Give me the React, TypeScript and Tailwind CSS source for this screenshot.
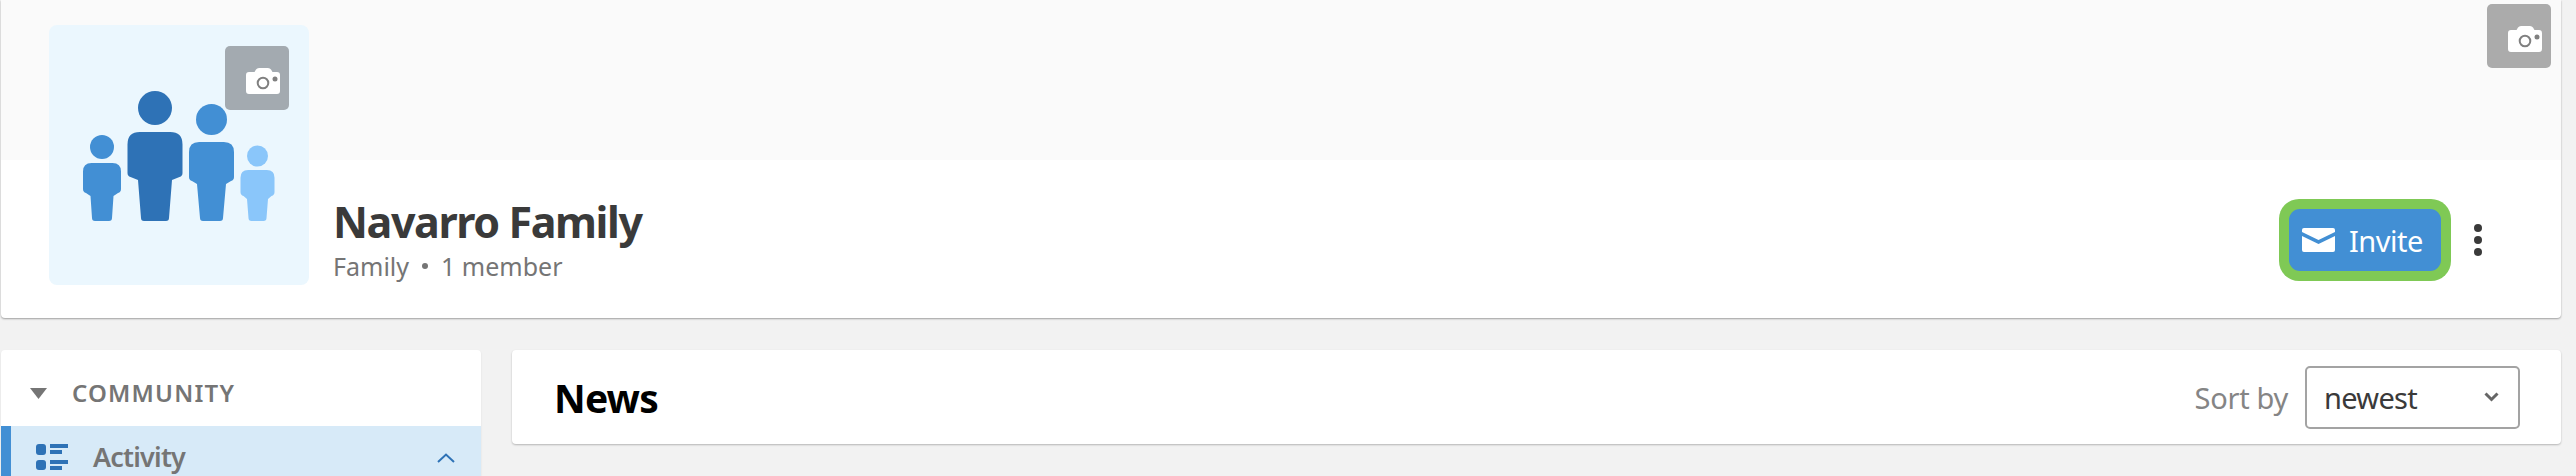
const font = { fontFamily: '"Noto Sans", "Open Sans", sans-serif' };

function Camera() {
  return (
    <svg width="34" height="26" viewBox="0 0 34 26" className="block">
      <path d="M3 4h5.500L10 1.500Q11 0 13 0h9q2 0 3 1.500L26.500 4H31q3 0 3 3v16q0 3-3 3H3q-3 0-3-3V7q0-3 3-3z" fill="#fff" />
      <circle cx="17" cy="15" r="5.300" fill="none" stroke="#808080" strokeWidth="2" />
      <circle cx="29" cy="11" r="2.500" fill="#808080" />
    </svg>
  );
}

function Person(p: { cx: number; hy: number; hr: number; top: number; hw: number; side: number; lt: number; lb: number; bottom: number; fill: string }) {
  const { cx, hy, hr, top, hw, side, lt, lb, bottom, fill } = p;
  const r = hw * 0.45;
  const d = `M${cx - hw + r} ${top}H${cx + hw - r}Q${cx + hw} ${top} ${cx + hw} ${top + r}V${side - 3}Q${cx + hw} ${side} ${cx + hw - 3} ${side + 1}L${cx + lt} ${side + 4}L${cx + lb} ${bottom - 3}Q${cx + lb} ${bottom} ${cx + lb - 3} ${bottom}H${cx - lb + 3}Q${cx - lb} ${bottom} ${cx - lb} ${bottom - 3}L${cx - lt} ${side + 4}L${cx - hw + 3} ${side + 1}Q${cx - hw} ${side} ${cx - hw} ${side - 3}V${top + r}Q${cx - hw} ${top} ${cx - hw + r} ${top}Z`;
  return (
    <g fill={fill}>
      <circle cx={cx} cy={hy} r={hr} />
      <path d={d} />
    </g>
  );
}

export default function App() {
  return (
    <div className="h-[476px] w-full overflow-hidden bg-[#f2f2f2] pl-px pr-[15px]" style={font}>
      <div className="relative h-[318px] rounded-b-[4px] bg-white shadow-[0_1px_2px_rgba(0,0,0,0.35)]">
        <div className="h-[160px] bg-[#fafafa]" />
        <div className="absolute left-[48px] top-[25px] h-[260px] w-[260px] rounded-[8px] bg-[#ebf7fe]">
          <svg width="260" height="260" viewBox="49 25 260 260" className="block">
            <Person cx={102} hy={147} hr={12} top={163} hw={19} side={192} lt={11.500} lb={10} bottom={221} fill="#428fd4" />
            <Person cx={155} hy={108} hr={17} top={132} hw={27.500} side={176} lt={17} lb={14} bottom={221} fill="#2e72b6" />
            <Person cx={211.500} hy={119.500} hr={15.500} top={142} hw={22.500} side={180} lt={14.500} lb={11.500} bottom={221} fill="#428fd4" />
            <Person cx={257.500} hy={156} hr={10.500} top={170} hw={17} side={195} lt={10.500} lb={9} bottom={221} fill="#8ac6fa" />
          </svg>
          <div className="absolute left-[176px] top-[21px] h-[64px] w-[64px] rounded-[5px] bg-[#a3aab0] pl-[21px] pt-[22px]">
            <Camera />
          </div>
        </div>
        <div className="absolute right-[10px] top-[4px] h-[64px] w-[64px] rounded-[5px] bg-[#ababab] pl-[21px] pt-[22px]">
          <Camera />
        </div>
        <div className="flex h-[158px] items-start pl-[332px] pr-[79px]">
          <div className="flex-1 pt-[35px]">
            <div className="text-[43px] font-bold leading-[54px] tracking-[-1.4px] text-[#3a3a3a]">Navarro Family</div>
            <div className="mt-px flex items-center text-[25px] leading-[32px] text-[#757575]">
              <span>Family</span>
              <span className="mx-[13px] h-[6px] w-[6px] rounded-full bg-[#757575]" />
              <span>1 member</span>
            </div>
          </div>
          <div className="mt-[39px] flex items-center">
            <div className="rounded-[20px] bg-[#7fc955] p-[10px]">
              <div className="flex h-[62px] w-[152px] items-center rounded-[11px] bg-[#428fd4] pl-[13px] text-white">
                <svg width="33" height="24" viewBox="0 0 33 24" className="block">
                  <path d="M2 0h29q2 0 2 2v2L16.500 12 0 4V2q0-2 2-2z" fill="#fff" />
                  <path d="M0 8l16.500 8L33 8v14q0 2-2 2H2q-2 0-2-2z" fill="#fff" />
                </svg>
                <span className="ml-[14px] text-[29px] leading-none tracking-[-0.5px]">Invite</span>
              </div>
            </div>
            <div className="ml-[23px] flex flex-col gap-[4px]">
              <span className="h-[8px] w-[8px] rounded-full bg-[#3a3a3a]" />
              <span className="h-[8px] w-[8px] rounded-full bg-[#3a3a3a]" />
              <span className="h-[8px] w-[8px] rounded-full bg-[#3a3a3a]" />
            </div>
          </div>
        </div>
      </div>

      <div className="mt-[32px] flex items-start gap-[31px]">
        <div className="h-[200px] w-[480px] shrink-0 rounded-[4px] bg-white shadow-[0_1px_2px_rgba(0,0,0,0.1)]">
          <div className="flex h-[76px] items-center pl-[29px] pt-[10px]">
            <svg width="17" height="11" viewBox="0 0 17 11" className="block">
              <path d="M0 0h17L8.500 11z" fill="#757575" />
            </svg>
            <span className="ml-[25px] text-[24px] font-semibold leading-none tracking-[1.2px] text-[#757575]">COMMUNITY</span>
          </div>
          <div className="flex h-[60px] items-start border-l-[10px] border-[#428fd4] bg-[#d7eaf8] pl-[25px] pr-[26px] pt-[18px]">
            <svg width="32" height="26" viewBox="0 0 32 26" className="block">
              <g fill="#2e72b6">
                <rect x="0" y="0" width="10" height="11" rx="3" />
                <rect x="0" y="16" width="10" height="10" rx="3" />
                <rect x="14" y="0" width="18" height="4" />
                <rect x="14" y="6" width="12" height="4" />
                <rect x="14" y="16" width="18" height="4" />
                <rect x="14" y="22" width="12" height="4" />
              </g>
            </svg>
            <span className="ml-[25px] flex-1 text-[27px] font-semibold leading-[26px] tracking-[-0.8px] text-[#757575]">Activity</span>
            <svg width="18" height="10" viewBox="0 0 18 10" className="mt-[9px] block">
              <path d="M1 9l8-7.500L17 9" fill="none" stroke="#2e72b6" strokeWidth="2" />
            </svg>
          </div>
        </div>
        <div className="flex h-[94px] flex-1 items-center rounded-[4px] bg-white pl-[42px] pr-[41px] shadow-[0_1px_2px_rgba(0,0,0,0.25)]">
          <span className="flex-1 text-[39px] font-bold leading-none tracking-[-0.8px] text-black">News</span>
          <span className="mr-[17px] text-[29px] leading-none tracking-[-0.3px] text-[#858585]">Sort by</span>
          <div className="flex h-[63px] w-[215px] items-center justify-between rounded-[5px] border-2 border-[#a3a3a3] pl-[17px] pr-[19px]">
            <span className="text-[29px] leading-none tracking-[-0.7px] text-[#3a3a3a]">newest</span>
            <svg width="15" height="10" viewBox="0 0 15 10" className="block">
              <path d="M1.500 1.500l6 6 6-6" fill="none" stroke="#666" strokeWidth="3" />
            </svg>
          </div>
        </div>
      </div>
    </div>
  );
}
